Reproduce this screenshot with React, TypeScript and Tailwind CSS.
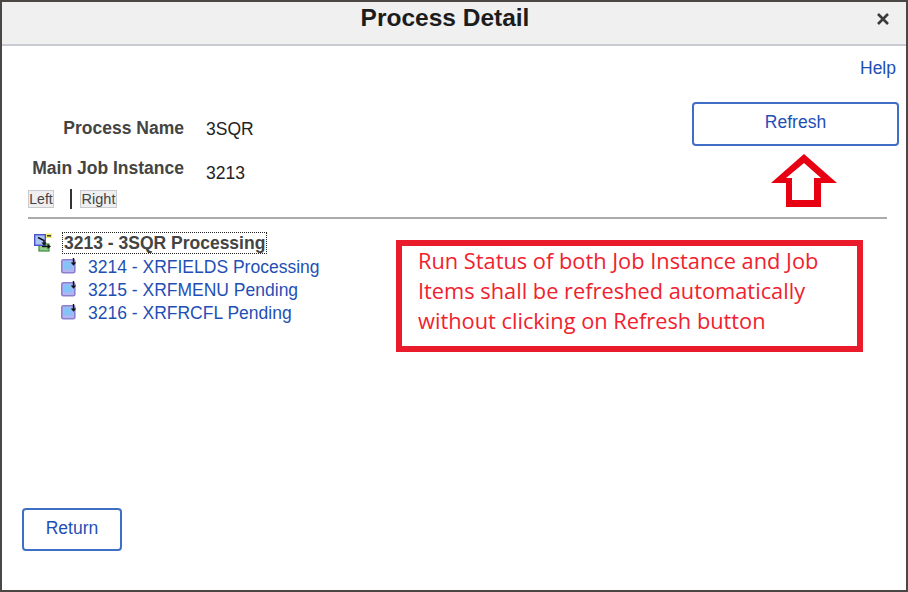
function DocIcon() {
  return (
    <svg width="18" height="17" viewBox="0 0 18 17" className="mb-[3px] shrink-0">
      <rect x="1.8" y="1.8" width="13" height="13" rx="1.5" fill="#b4b4f0" stroke="#8a80d0" strokeWidth="1.6" />
      <rect x="3.5" y="3.5" width="9" height="8" fill="#86c2f7" />
      <path d="M13.5 0v5" stroke="#111" strokeWidth="1.4" />
      <path d="M10.8 4.5h5.4l-2.7 3.2z" fill="#111" />
    </svg>
  );
}

function RootIcon() {
  return (
    <svg width="20" height="20" viewBox="0 0 20 20" className="shrink-0">
      <rect x="6" y="11" width="10" height="7" fill="#8fd08a" stroke="#3c8a3c" strokeWidth="1.2" />
      <rect x="1.7" y="1.7" width="10.6" height="10.6" fill="#a9c4f5" stroke="#4a52c8" strokeWidth="1.4" />
      <rect x="13" y="0.5" width="6" height="4.5" fill="#f3ee6a" />
      <path d="M14 2.8h4" stroke="#222" strokeWidth="1.3" />
      <path d="M5 4.5l6 3v3" stroke="#111" strokeWidth="1.4" fill="none" />
      <path d="M8.5 9.5h5l-2.5 3z" fill="#111" />
      <path d="M9 13.5h6" stroke="#111" strokeWidth="1.4" />
      <path d="M14.5 11l3.5 2.5-3.5 2.5z" fill="#111" />
    </svg>
  );
}

function TreeRow({ label }: { label: string }) {
  return (
    <div className="flex h-[23px] items-center gap-[10px]">
      <DocIcon />
      <a className="text-[17.5px] leading-none text-[#1f4fb4]">{label}</a>
    </div>
  );
}

export default function App() {
  return (
    <div className="relative box-border flex h-[592px] w-[908px] flex-col border-2 border-[#4a4745] bg-white font-['Liberation_Sans',Arial,sans-serif]">
      <header className="relative flex h-[44px] shrink-0 items-center justify-center border-b-2 border-[#c8ccd2] bg-[#f0f0f0] pb-[9px] pr-[18px]">
        <h1 className="text-[24.5px] font-bold leading-none text-[#1c1c1c]">Process Detail</h1>
        <svg width="14" height="14" viewBox="0 0 14 14" className="absolute right-[16px] top-[10px]">
          <path d="M2 2l10 10M12 2L2 12" stroke="#3a3a3a" strokeWidth="2.6" />
        </svg>
      </header>

      <div className="flex flex-1 flex-col pl-[20px] pr-[7px]">
        <div className="flex justify-end pr-[3px] pt-[12px]">
          <a className="text-[17.5px] leading-[20px] text-[#1f4fb4]">Help</a>
        </div>

        <div className="mt-[31px] flex items-start justify-between">
          <div className="flex flex-col">
            <div className="flex h-[40px] items-center">
              <span className="w-[162px] pb-[2px] text-right text-[17.5px] font-bold text-[#444]">Process Name</span>
              <span className="ml-[22px] text-[17.5px] text-[#222]">3SQR</span>
            </div>
            <div className="flex h-[40px] items-center">
              <span className="w-[162px] pb-[2px] text-right text-[17.5px] font-bold text-[#444]">Main Job Instance</span>
              <span className="ml-[22px] pt-[8px] text-[17.5px] text-[#222]">3213</span>
            </div>
          </div>
          <button className="mt-[-7px] h-[44px] w-[207px] rounded-[4px] border-2 border-[#3f6fc4] pb-[3px] text-[17.5px] text-[#1f4fb4]">
            Refresh
          </button>
        </div>

        <div className="ml-[6px] flex h-[20px] items-center">
          <span className="w-[26px] border border-[#c8ccd0] bg-[#efefef] text-center text-[14px] leading-[16px] text-[#444]">Left</span>
          <span className="ml-[16px] h-[20px] w-[2px] bg-[#333]" />
          <span className="ml-[8px] w-[37px] border border-[#c8ccd0] bg-[#efefef] text-center text-[14.5px] leading-[16px] text-[#444]">Right</span>
        </div>

        <div className="ml-[6px] mt-[8px] mr-[12px] h-[2px] bg-[#aaa]" />

        <div className="ml-[11px] mt-[12px] flex h-[24px] items-center gap-[9px]">
          <RootIcon />
          <span className="border border-dotted border-[#222] px-px text-[17.5px] font-bold leading-[20px] text-[#444]">3213 - 3SQR Processing</span>
        </div>
        <div className="ml-[38px] mt-px flex flex-col">
          <TreeRow label="3214 - XRFIELDS Processing" />
          <TreeRow label="3215 - XRFMENU Pending" />
          <TreeRow label="3216 - XRFRCFL Pending" />
        </div>

        <div className="mt-[183px]">
          <button className="h-[43px] w-[100px] rounded-[4px] border-2 border-[#3f6fc4] pb-[3px] text-[17.5px] text-[#1f4fb4]">
            Return
          </button>
        </div>
      </div>

      <svg width="66" height="54" viewBox="0 0 66 54" className="absolute left-[769px] top-[152px]">
        <path
          fillRule="evenodd"
          d="M33 0L66 29H50V53H15V29H0zM33 9L15 24H21V46H43V24H50z"
          fill="#e60012"
        />
      </svg>

      <div className="absolute left-[394px] top-[238px] box-border h-[112px] w-[467px] border-[6px] border-[#ea1c2c] bg-white pl-[16px] font-['Open_Sans',sans-serif] text-[21.8px] leading-[30px] text-[#f0222e]">
        Run Status of both Job Instance and Job
        <br />
        Items shall be refreshed automatically
        <br />
        without clicking on Refresh button
      </div>
    </div>
  );
}
